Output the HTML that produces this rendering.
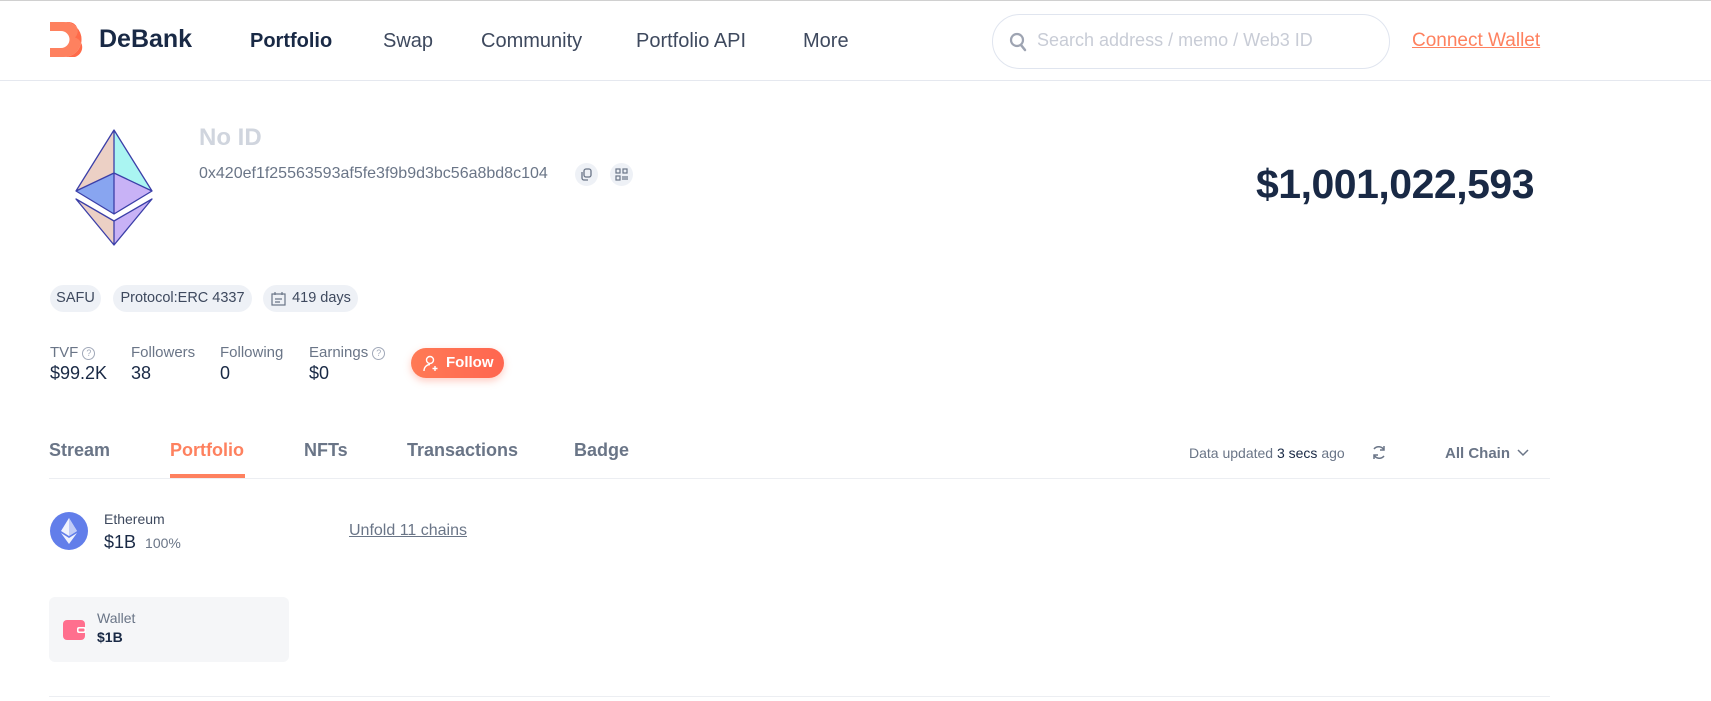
<!DOCTYPE html>
<html><head><meta charset="utf-8"><style>
*{box-sizing:border-box;margin:0;padding:0}
body{width:1711px;height:701px;overflow:hidden;background:#fff;font-family:"Liberation Sans",sans-serif;position:relative;color:#192945}
.a{position:absolute;white-space:nowrap}
.nav{font-size:20px;color:#3e495e;top:30px}
.tag{position:absolute;white-space:nowrap;top:285px;height:27px;border-radius:14px;background:#eef1f6;font-size:14.5px;color:#3e495e;line-height:27px;padding:0 8px;text-align:center}
.lab{font-size:15px;color:#6a7587;top:344px}
.val{font-size:18px;color:#192945;top:363px}
.tab{font-size:18px;color:#6a7587;top:440px;font-weight:bold}
.q{display:inline-block;width:13px;height:13px;border:1px solid #a0a8b8;border-radius:50%;font-size:9px;line-height:11px;text-align:center;color:#a0a8b8;vertical-align:1px;margin-left:4px}
</style></head><body>
<div class="a" style="top:0;left:0;width:1711px;height:1px;background:#d0d0d0"></div>
<svg class="a" style="left:50px;top:22px" width="33" height="35" viewBox="0 0 33 35">
<path d="M0 0h14a17 17 0 0 1 0 35H0v-9h11a8.5 8.5 0 0 0 0-17H0z" fill="#fe815f"/>
<path d="M14 0h5a9 9 0 0 1 6 15.5a10 10 0 0 1-6 19.5h-5a17 17 0 0 0 0-35z" fill="#ff6b4a"/>
</svg>
<div class="a" style="left:99px;top:25px;font-size:25px;font-weight:bold;color:#192945">DeBank</div>
<div class="a nav" style="left:250px;color:#192945;font-weight:bold">Portfolio</div>
<div class="a nav" style="left:383px">Swap</div>
<div class="a nav" style="left:481px">Community</div>
<div class="a nav" style="left:636px">Portfolio API</div>
<div class="a nav" style="left:803px">More</div>
<div class="a" style="left:992px;top:14px;width:398px;height:55px;border:1px solid #e0e5ef;border-radius:28px"></div>
<svg class="a" style="left:1009px;top:32px" width="18" height="20" viewBox="0 0 18 20"><circle cx="8" cy="8" r="6" fill="none" stroke="#9ea4b2" stroke-width="2.2"/><path d="M12 13l4 5" stroke="#9ea4b2" stroke-width="2.5" stroke-linecap="round"/></svg>
<div class="a" style="left:1037px;top:30px;font-size:18px;color:#c8ccd6">Search address / memo / Web3 ID</div>
<div class="a" style="left:1412px;top:30px;font-size:19px;color:#fe815f;text-decoration:underline">Connect Wallet</div>
<div class="a" style="left:0;top:80px;width:1711px;height:1px;background:#e5e8ef"></div>
<svg class="a" style="left:74px;top:129px" width="80" height="117" viewBox="0 0 80 117">
<path d="M40 1L2 62L40 44z" fill="#ecd0c5"/><path d="M40 1L78 62L40 44z" fill="#aaf5f2"/>
<path d="M2 62L40 44V85z" fill="#88a5f0"/><path d="M78 62L40 44V85z" fill="#c8b2f6"/>
<path d="M2 70L40 92V116z" fill="#ecd0c5"/><path d="M78 70L40 92V116z" fill="#c8b2f6"/>
<path d="M40 1L2 62L40 85L78 62z M2 70L40 116L78 70L40 92z M40 1V85 M2 62L40 44L78 62 M40 92V116" fill="none" stroke="#3b3fa8" stroke-width="1.3" stroke-linejoin="round"/>
</svg>
<div class="a" style="left:199px;top:124px;font-size:24px;font-weight:bold;color:#d0d5de">No ID</div>
<div class="a" style="left:199px;top:165px;font-size:16px;color:#6a7587">0x420ef1f25563593af5fe3f9b9d3bc56a8bd8c104</div>
<div class="a" style="left:575px;top:163px;width:23px;height:23px;border-radius:50%;background:#eef1f6"></div>
<svg class="a" style="left:580px;top:168px" width="13" height="13" viewBox="0 0 13 13"><rect x="4" y="1" width="7" height="8" rx="2" fill="none" stroke="#6a7587" stroke-width="1.3"/><path d="M2 4v6a2 2 0 0 0 2 2h4" fill="none" stroke="#6a7587" stroke-width="1.3"/></svg>
<div class="a" style="left:610px;top:163px;width:23px;height:23px;border-radius:50%;background:#eef1f6"></div>
<svg class="a" style="left:615px;top:168px" width="13" height="13" viewBox="0 0 13 13"><g fill="none" stroke="#6a7587" stroke-width="1.2"><rect x="1" y="1" width="4" height="4"/><rect x="8" y="1" width="4" height="4"/><rect x="1" y="8" width="4" height="4"/><path d="M8 8v4M10 8v4M12 8v4"/></g></svg>
<div class="a" style="left:1256px;top:161px;font-size:41px;font-weight:bold;color:#192945;letter-spacing:-0.5px">$1,001,022,593</div>
<div class="tag" style="left:50px;width:51px;padding:0">SAFU</div>
<div class="tag" style="left:113px;width:139px;padding:0">Protocol:ERC 4337</div>
<div class="tag" style="left:263px;width:95px;padding:0 0 0 22px">419 days</div>
<svg class="a" style="left:271px;top:291px" width="15" height="15" viewBox="0 0 15 15"><g fill="none" stroke="#6a7587" stroke-width="1.2"><rect x="1" y="3" width="13" height="11"/><path d="M4 1v3M11 1v3M4 8h7M4 11h5"/></g></svg>
<div class="a lab" style="left:50px">TVF<span class="q">?</span></div>
<div class="a lab" style="left:131px">Followers</div>
<div class="a lab" style="left:220px">Following</div>
<div class="a lab" style="left:309px">Earnings<span class="q">?</span></div>
<div class="a val" style="left:50px">$99.2K</div>
<div class="a val" style="left:131px">38</div>
<div class="a val" style="left:220px">0</div>
<div class="a val" style="left:309px">$0</div>
<div class="a" style="left:411px;top:348px;width:93px;height:30px;border-radius:15px;background:linear-gradient(90deg,#ff7a55,#ff6650);box-shadow:0 3px 8px rgba(255,110,80,.35);color:#fff;font-size:15px;font-weight:bold;line-height:30px;padding-left:35px">Follow</div>
<svg class="a" style="left:423px;top:355px" width="16" height="17" viewBox="0 0 16 17"><g fill="none" stroke="#fff" stroke-width="1.4"><circle cx="7" cy="5" r="3.5"/><path d="M1 16c0-4 3-6.5 6-6.5M12 11v5M9.5 13.5h5"/></g></svg>
<div class="a tab" style="left:49px">Stream</div>
<div class="a tab" style="left:170px;color:#fe815f">Portfolio</div>
<div class="a tab" style="left:304px">NFTs</div>
<div class="a tab" style="left:407px">Transactions</div>
<div class="a tab" style="left:574px">Badge</div>
<div class="a" style="left:170px;top:474px;width:75px;height:5px;background:#fe815f"></div>
<div class="a" style="left:49px;top:478px;width:1501px;height:1px;background:#eceef2"></div>
<div class="a" style="left:1189px;top:445px;font-size:14px;color:#6a7587">Data updated <span style="color:#192945">3 secs</span> ago</div>
<svg class="a" style="left:1371px;top:444px" width="16" height="17" viewBox="0 0 16 17"><g fill="none" stroke="#6a7587" stroke-width="1.5"><path d="M3 5a6 6 0 0 1 10 1M13 12a6 6 0 0 1-10-1"/><path d="M13 2v4h-4M3 15v-4h4"/></g></svg>
<div class="a" style="left:1445px;top:445px;font-size:15px;font-weight:bold;color:#6a7587">All Chain</div>
<svg class="a" style="left:1517px;top:449px" width="12" height="8" viewBox="0 0 12 8"><path d="M1 1l5 5 5-5" fill="none" stroke="#6a7587" stroke-width="1.5"/></svg>
<svg class="a" style="left:50px;top:512px" width="38" height="38" viewBox="0 0 38 38"><circle cx="19" cy="19" r="19" fill="#627eea"/><path d="M19 6l-8 13 8 5 8-5z" fill="#fff" opacity=".9"/><path d="M19 26l-8-5 8 11 8-11z" fill="#fff" opacity=".9"/><path d="M19 6v18l8-5z" fill="#c1ccf7"/></svg>
<div class="a" style="left:104px;top:511px;font-size:14px;color:#3e495e">Ethereum</div>
<div class="a" style="left:104px;top:532px;font-size:18px;color:#192945">$1B <span style="font-size:14px;color:#6a7587;margin-left:4px">100%</span></div>
<div class="a" style="left:349px;top:522px;font-size:16px;color:#6a7587;text-decoration:underline">Unfold 11 chains</div>
<div class="a" style="left:49px;top:597px;width:240px;height:65px;border-radius:6px;background:#f5f6f8"></div>
<svg class="a" style="left:63px;top:620px" width="24" height="20" viewBox="0 0 24 20"><rect x="0" y="0" width="22" height="20" rx="4" fill="#ff6f8e"/><rect x="14" y="7" width="9" height="6" rx="2" fill="#fff"/><rect x="15.5" y="8.5" width="6" height="3" rx="1" fill="#ff6f8e"/></svg>
<div class="a" style="left:97px;top:610px;font-size:14px;color:#6a7587">Wallet</div>
<div class="a" style="left:97px;top:629px;font-size:14px;font-weight:bold;color:#192945">$1B</div>
<div class="a" style="left:49px;top:696px;width:1501px;height:1px;background:#eceef2"></div>
</body></html>
